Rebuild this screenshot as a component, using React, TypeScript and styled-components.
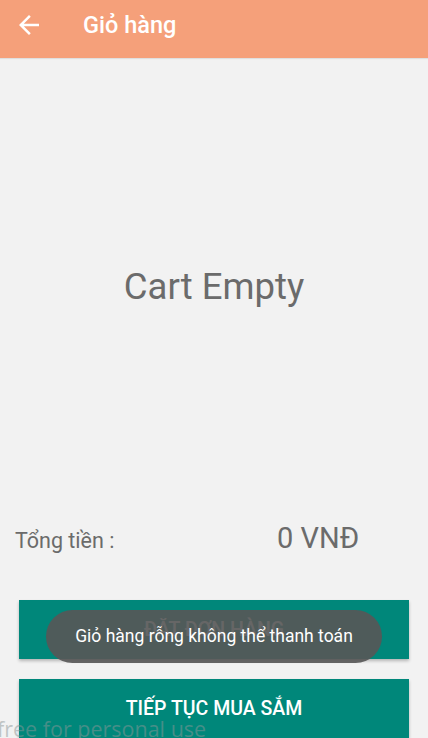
import styled, { createGlobalStyle } from "styled-components";
import { MdArrowBack } from "react-icons/md";

const GlobalStyle = createGlobalStyle`
    html, body {
        margin: 0;
        padding: 0;
        background: #f2f2f2;
    }
    body {
        font-family: Roboto, "Noto Sans", sans-serif;
    }
`;

// Whole phone screen
const Screen = styled.div`
    position: relative;
    display: flex;
    flex-direction: column;
    width: 428px;
    height: 738px;
    overflow: hidden;
    background: #f2f2f2;
`;

// Peach app bar at the top
const AppBar = styled.header`
    display: flex;
    align-items: center;
    height: 58px;
    flex-shrink: 0;
    padding: 0 0 8px 14px;
    box-sizing: border-box;
    background: #f5a07a;
    box-shadow: 0 1px 1px rgba(0, 0, 0, 0.08);
    color: #ffffff;
`;

const BackButton = styled.div`
    display: flex;
    width: 30px;
    height: 30px;
`;

const Title = styled.h1`
    margin: 0 0 0 39px;
    font-size: 23.5px;
    font-weight: 500;
`;

// Empty state in the middle
const EmptyArea = styled.main`
    flex: 1;
    display: flex;
    align-items: center;
    justify-content: center;
`;

const EmptyText = styled.p`
    margin: 0;
    font-size: 36.5px;
    color: #6b6b6b;
`;

// Total row
const TotalRow = styled.div`
    display: flex;
    align-items: baseline;
    height: 64px;
    flex-shrink: 0;
    box-sizing: border-box;
    padding: 9px 15px 0;
    line-height: 1;
    color: #6b6b6b;
`;

const TotalLabel = styled.span`
    width: 262px;
    font-size: 21.5px;
`;

const TotalValue = styled.span`
    font-size: 29px;
`;

const Buttons = styled.div`
    display: flex;
    flex-direction: column;
    flex-shrink: 0;
    gap: 20px;
    padding: 21px 19px 0;
`;

const ActionButton = styled.button`
    height: 59px;
    border: none;
    border-radius: 0;
    background: #00877a;
    color: #ffffff;
    font-family: Roboto, "Noto Sans", sans-serif;
    font-size: 19.5px;
    font-weight: 500;
    text-transform: uppercase;
    box-shadow: 0 2px 3px rgba(0, 0, 0, 0.25);
`;

// Overlays
const Toast = styled.div`
    position: absolute;
    left: 46px;
    top: 610px;
    width: 336px;
    height: 53px;
    border-radius: 27px;
    display: flex;
    align-items: center;
    justify-content: center;
    padding-bottom: 2px;
    box-sizing: border-box;
    background: rgba(87, 87, 87, 0.91);
    color: #ffffff;
    font-size: 17.5px;
`;

const Watermark = styled.div`
    position: absolute;
    left: -3px;
    bottom: -4px;
    font-family: "Open Sans", sans-serif;
    font-size: 21.5px;
    line-height: 1.2;
    color: rgba(140, 150, 150, 0.5);
    white-space: nowrap;
    pointer-events: none;
`;

export default function App() {
    return (
        <>
            <GlobalStyle />
            <Screen>
                <AppBar>
                    <BackButton>
                        <MdArrowBack size={30} />
                    </BackButton>
                    <Title>Giỏ hàng</Title>
                </AppBar>
                <EmptyArea>
                    <EmptyText>Cart Empty</EmptyText>
                </EmptyArea>
                <TotalRow>
                    <TotalLabel>Tổng tiền :</TotalLabel>
                    <TotalValue>0 VNĐ</TotalValue>
                </TotalRow>
                <Buttons>
                    <ActionButton>Đặt đơn hàng</ActionButton>
                    <ActionButton>Tiếp tục mua sắm</ActionButton>
                </Buttons>
                <Toast>Giỏ hàng rỗng không thể thanh toán</Toast>
                <Watermark>free for personal use</Watermark>
            </Screen>
        </>
    );
}
